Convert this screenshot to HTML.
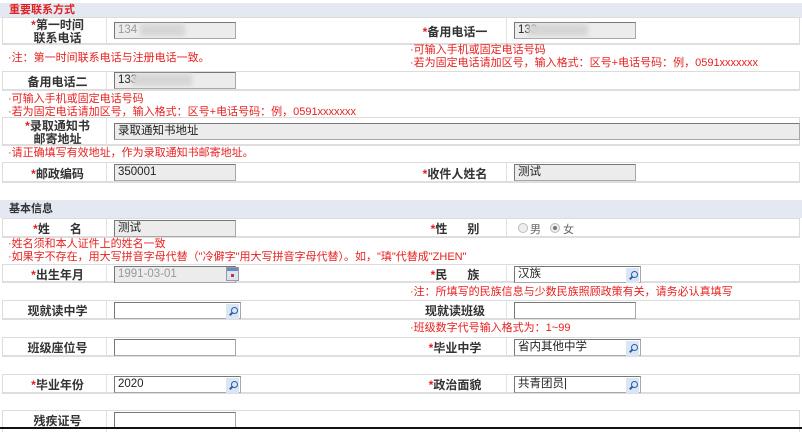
<!DOCTYPE html>
<html><head><meta charset="utf-8"><style>
*{margin:0;padding:0;box-sizing:border-box}
body{width:802px;height:429px;background:#fff;position:relative;overflow:hidden;font-family:"Liberation Sans","Noto Sans CJK SC",sans-serif;font-size:11px;color:#333}
.a{position:absolute}
.hd{position:absolute;left:0;width:802px;height:15px;background:#e3e8f3;font-weight:bold;font-size:11px;line-height:15px;padding-left:9px}
.row{position:absolute;left:2px;width:798px;border:1px solid #dcdcdc;border-bottom:2px solid #dedede}
.vl{position:absolute;top:0;bottom:0;width:1px;background:#e2e2e2}
.lb{position:absolute;font-weight:bold;font-size:12px;text-align:center;line-height:13px;color:#333}
.s{color:#e02020}
.in{position:absolute;height:17px;border:1px solid #a8a8a8;border-top-color:#777;border-left-color:#777;background:#fff;font-size:11.5px;line-height:15px;padding-left:3px;color:#222}
.g{background:#ececec}
.n{position:absolute;color:#e82020;font-size:11px;line-height:13px}
.ic{position:absolute;width:13px;height:15px;background:#dbe6f5;top:1px;right:1px}
.ic:after{content:"";position:absolute;left:5px;top:3px;width:5px;height:5px;border:1.5px solid #2a5ea8;border-radius:50%}
.ic:before{content:"";position:absolute;left:3px;top:9px;width:4px;height:1.5px;background:#2a5ea8;transform:rotate(-45deg)}
.blur{position:absolute;background:#d6d6d6;filter:blur(2px)}
</style></head><body>
<div class="hd s" style="top:3px">重要联系方式</div>

<div class="row" style="top:17px;height:28px"><div class="vl" style="left:103px"></div><div class="vl" style="left:503px"></div></div>
<div class="lb" style="left:10px;width:95px;top:19px"><span class="s">*</span>第一时间<br>联系电话</div>
<div class="in g" style="left:114px;top:22px;width:122px;color:#999">134</div>
<div class="blur" style="left:140px;top:24px;width:45px;height:12px"></div>
<div class="lb" style="left:405px;width:100px;top:26px"><span class="s">*</span>备用电话一</div>
<div class="in g" style="left:514px;top:22px;width:122px">133</div>
<div class="blur" style="left:528px;top:24px;width:60px;height:12px"></div>

<div class="n" style="left:8px;top:52px">·注：第一时间联系电话与注册电话一致。</div>
<div class="n" style="left:410px;top:44px">·可输入手机或固定电话号码<br>·若为固定电话请加区号，输入格式：区号+电话号码：例，0591xxxxxxx</div>

<div class="row" style="top:71px;height:20px"><div class="vl" style="left:103px"></div></div>
<div class="lb" style="left:10px;width:95px;top:76px">备用电话二</div>
<div class="in g" style="left:114px;top:72px;width:122px">133</div>
<div class="blur" style="left:132px;top:74px;width:60px;height:12px"></div>

<div class="n" style="left:8px;top:93px">·可输入手机或固定电话号码<br>·若为固定电话请加区号，输入格式：区号+电话号码：例，0591xxxxxxx</div>

<div class="row" style="top:117px;height:29px"><div class="vl" style="left:103px"></div></div>
<div class="lb" style="left:10px;width:95px;top:120px"><span class="s">*</span>录取通知书<br>邮寄地址</div>
<div class="in g" style="left:114px;top:123px;width:686px">录取通知书地址</div>

<div class="n" style="left:8px;top:147px">·请正确填写有效地址，作为录取通知书邮寄地址。</div>

<div class="row" style="top:162px;height:21px"><div class="vl" style="left:103px"></div><div class="vl" style="left:503px"></div></div>
<div class="lb" style="left:10px;width:95px;top:168px"><span class="s">*</span>邮政编码</div>
<div class="in g" style="left:114px;top:164px;width:122px">350001</div>
<div class="lb" style="left:405px;width:100px;top:168px"><span class="s">*</span>收件人姓名</div>
<div class="in g" style="left:514px;top:164px;width:122px">测试</div>

<div class="hd" style="top:200px;height:18px;line-height:18px">基本信息</div>

<div class="row" style="top:218px;height:20px"><div class="vl" style="left:103px"></div><div class="vl" style="left:503px"></div></div>
<div class="lb" style="left:10px;width:95px;top:223px"><span class="s">*</span>姓&nbsp;&nbsp;&nbsp;&nbsp;&nbsp;&nbsp;名</div>
<div class="in g" style="left:114px;top:220px;width:122px">测试</div>
<div class="lb" style="left:405px;width:100px;top:223px"><span class="s">*</span>性&nbsp;&nbsp;&nbsp;&nbsp;&nbsp;&nbsp;别</div>
<div class="a" style="left:518px;top:223px;width:10px;height:10px;border:1px solid #bbb;border-radius:50%;background:#eee"></div>
<div class="a" style="left:530px;top:221px;color:#666">男</div>
<div class="a" style="left:550px;top:223px;width:10px;height:10px;border:1px solid #bbb;border-radius:50%;background:#eee"><div class="a" style="left:2px;top:2px;width:4px;height:4px;border-radius:50%;background:#777"></div></div>
<div class="a" style="left:563px;top:221px;color:#666">女</div>

<div class="n" style="left:8px;top:238px">·姓名须和本人证件上的姓名一致<br>·如果字不存在，用大写拼音字母代替（"冷僻字"用大写拼音字母代替）。如，"瑱"代替成"ZHEN"</div>

<div class="row" style="top:264px;height:19px"><div class="vl" style="left:103px"></div><div class="vl" style="left:503px"></div></div>
<div class="lb" style="left:10px;width:95px;top:269px"><span class="s">*</span>出生年月</div>
<div class="in g" style="left:114px;top:266px;width:122px;color:#999">1991-03-01</div>
<div class="a" style="left:226px;top:267px;width:13px;height:14px;background:#dbe4f0;border:1px solid #99a"><div class="a" style="left:0;top:0;width:11px;height:3px;background:#6a8ac0"></div><div class="a" style="left:4px;top:6px;width:3px;height:3px;background:#c33"></div></div>
<div class="lb" style="left:405px;width:100px;top:269px"><span class="s">*</span>民&nbsp;&nbsp;&nbsp;&nbsp;&nbsp;&nbsp;族</div>
<div class="in" style="left:514px;top:266px;width:127px">汉族<div class="ic"></div></div>

<div class="n" style="left:410px;top:286px">·注：所填写的民族信息与少数民族照顾政策有关，请务必认真填写</div>

<div class="row" style="top:300px;height:20px"><div class="vl" style="left:103px"></div><div class="vl" style="left:503px"></div></div>
<div class="lb" style="left:10px;width:95px;top:305px">现就读中学</div>
<div class="in" style="left:114px;top:302px;width:127px"><div class="ic"></div></div>
<div class="lb" style="left:405px;width:100px;top:305px">现就读班级</div>
<div class="in" style="left:514px;top:302px;width:122px"></div>

<div class="n" style="left:410px;top:322px">·班级数字代号输入格式为：1~99</div>

<div class="row" style="top:337px;height:20px"><div class="vl" style="left:103px"></div><div class="vl" style="left:503px"></div></div>
<div class="lb" style="left:10px;width:95px;top:342px">班级座位号</div>
<div class="in" style="left:114px;top:339px;width:122px"></div>
<div class="lb" style="left:405px;width:100px;top:342px"><span class="s">*</span>毕业中学</div>
<div class="in" style="left:514px;top:339px;width:127px">省内其他中学<div class="ic"></div></div>

<div class="row" style="top:374px;height:20px"><div class="vl" style="left:103px"></div><div class="vl" style="left:503px"></div></div>
<div class="lb" style="left:10px;width:95px;top:379px"><span class="s">*</span>毕业年份</div>
<div class="in" style="left:114px;top:376px;width:127px">2020<div class="ic"></div></div>
<div class="lb" style="left:405px;width:100px;top:379px"><span class="s">*</span>政治面貌</div>
<div class="in" style="left:514px;top:376px;width:127px">共青团员|<div class="ic"></div></div>

<div class="row" style="top:410px;height:22px;border-bottom:none"><div class="vl" style="left:103px"></div></div>
<div class="lb" style="left:10px;width:95px;top:415px">残疾证号</div>
<div class="in" style="left:114px;top:412px;width:122px"></div>
<div class="a" style="left:0;top:427px;width:802px;height:2px;background:#111"></div>
</body></html>
